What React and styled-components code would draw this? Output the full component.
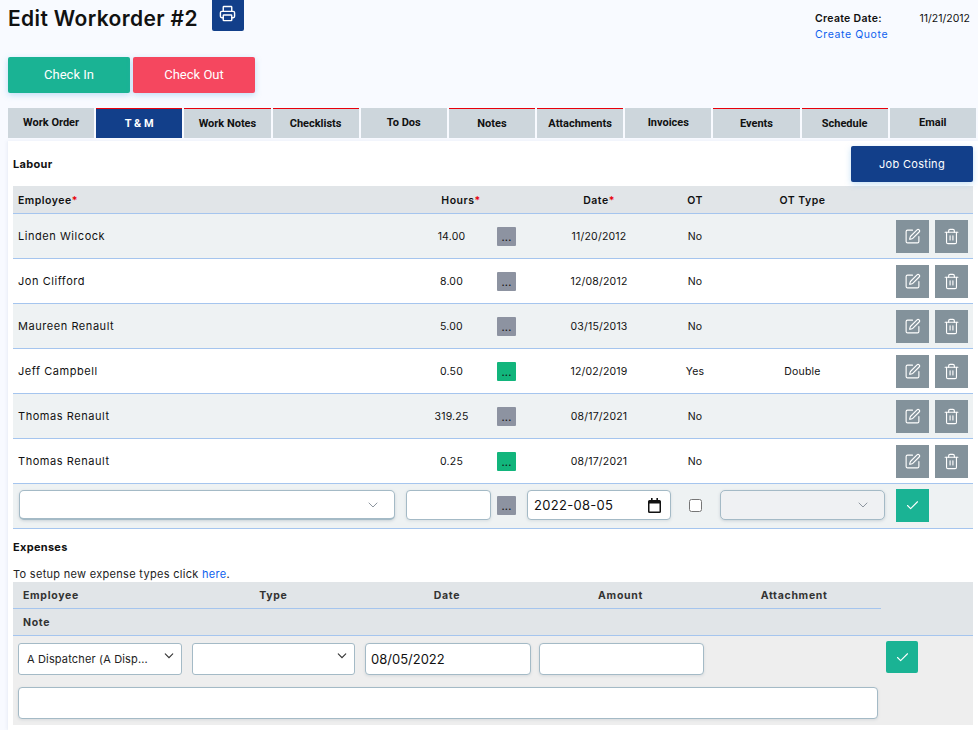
import React from 'react'
import styled, { createGlobalStyle } from 'styled-components'
import { Printer, SquarePen, Trash2, Check, ChevronDown } from 'lucide-react'

const GlobalStyle = createGlobalStyle`
  html, body {
    margin: 0;
    padding: 0;
    background: #f8faff;
    font-family: Inter, "Liberation Sans", sans-serif;
    color: #111;
  }
  * { box-sizing: border-box; }
`

const chevron = encodeURIComponent(
  `<svg xmlns="http://www.w3.org/2000/svg" width="10" height="10" viewBox="0 0 24 24" fill="none" stroke="#333" stroke-width="2.6" stroke-linecap="round"><path d="m3 7 9 9 9-9"/></svg>`
)

const Page = styled.div`
  width: 978px;
  height: 730px;
  overflow: hidden;
  padding-left: 8px;
`

const Header = styled.header`
  display: flex;
  justify-content: space-between;
  height: 57px;
`

const TitleRow = styled.div`
  display: flex;
  align-items: flex-start;
  gap: 14px;
`

const Title = styled.h1`
  margin: 6px 0 0;
  font-size: 21px;
  line-height: 25px;
  font-weight: 600;
  letter-spacing: 0.36px;
  color: #111;
`

const PrintButton = styled.button`
  width: 32px;
  height: 31px;
  border: 0;
  border-radius: 0 0 2px 2px;
  background: #123f8a;
  color: #fff;
  display: flex;
  align-items: center;
  justify-content: center;
  padding: 0 0 4px;
`

const Meta = styled.div`
  width: 155px;
  margin-right: 8px;
  padding-top: 11px;
  font-size: 10.5px;
  line-height: 16px;
  letter-spacing: 0.6px;
`

const MetaRow = styled.div`
  display: flex;
  justify-content: space-between;
  font-weight: 600;
  letter-spacing: 0.3px;

  span:last-child {
    font-weight: 400;
    letter-spacing: 0;
  }
`

const BlueLink = styled.a`
  color: #0d5fee;
  text-decoration: none;
`

const ActionRow = styled.div`
  display: flex;
  gap: 3px;
  height: 51px;
`

const ActionButton = styled.button`
  width: 122px;
  height: 36px;
  border: 0;
  border-radius: 2px;
  background: ${props => props.$bg};
  color: #fff;
  font-family: Roboto, sans-serif;
  font-size: 13px;
  padding: 0 0 2px;
  box-shadow: 0 2px 6px rgba(90, 170, 230, 0.35);
`

const Tabs = styled.nav`
  display: grid;
  grid-template-columns: repeat(11, 86.18px);
  gap: 2px;
  height: 33px;
`

const Tab = styled.div`
  height: 30px;
  display: flex;
  align-items: center;
  justify-content: center;
  background: ${props => (props.$active ? '#123f8a' : '#cdd6dc')};
  color: ${props => (props.$active ? '#fff' : '#111')};
  border-top: ${props => (props.$flagged ? '1.5px solid #e8000b' : '0')};
  padding-bottom: ${props => (props.$flagged ? '0' : '2px')};
  font-family: Roboto, sans-serif;
  font-size: 11px;
  font-weight: 700;
`

const Card = styled.main`
  background: #fff;
  padding: 5px 5px 0;
  height: 589px;
  box-shadow: -1px 0 3px rgba(120, 140, 170, 0.12);
`

const LabourHead = styled.div`
  display: flex;
  justify-content: space-between;
  align-items: center;
  height: 36px;
  margin-bottom: 4px;
`

const Heading = styled.h2`
  margin: 0;
  font-size: 11px;
  line-height: 13px;
  font-weight: 700;
  letter-spacing: 0.3px;
  color: #111;
`

const CostingButton = styled.button`
  width: 122px;
  height: 36px;
  border: 0;
  border-radius: 2px;
  background: #123f8a;
  color: #fff;
  font-family: inherit;
  font-size: 11px;
  letter-spacing: 0.3px;
  box-shadow: 0 2px 6px rgba(90, 170, 230, 0.35);
`

const LabourGrid = `
  display: grid;
  grid-template-columns: 393px 85px 31px 154px 38px 177px 82px;
  align-items: center;
  border-bottom: 1px solid #a5c5ee;
`

const LabourHeadRow = styled.div`
  ${LabourGrid}
  height: 28px;
  padding-top: 2px;
  background: #e1e5e8;
  font-size: 10.5px;
  font-weight: 600;
  letter-spacing: 0.5px;
`

const LabourRow = styled.div`
  ${LabourGrid}
  height: 45px;
  background: ${props => (props.$shade ? '#eef2f3' : '#fff')};
  font-size: 10.5px;
  font-weight: 400;
  letter-spacing: 0.2px;
`

const FormRow = styled(LabourRow)`
  background: #eef2f3;
  padding-bottom: 2px;
`

const Cell = styled.div`
  text-align: ${props => props.$align || 'center'};
  padding-left: ${props => props.$pad || 0}px;
  white-space: nowrap;
  display: ${props => (props.$flex ? 'flex' : 'block')};
  gap: 6px;
`

const NameCell = styled(Cell)`
  font-size: 11px;
  letter-spacing: 0.55px;
`

const Required = styled.span`
  color: #e8000b;
`

const DotsButton = styled.div`
  width: 19px;
  height: 19px;
  margin-left: 6px;
  border-radius: 1px;
  background: ${props => (props.$on ? '#12b57c' : '#8d93a1')};
  color: #111;
  font-size: 11px;
  line-height: 20px;
  text-align: center;
`

const IconButton = styled.div`
  width: 33px;
  height: 33px;
  background: ${props => (props.$ok ? '#1ab394' : '#83929b')};
  color: #fff;
  display: flex;
  align-items: center;
  justify-content: center;
  border-radius: ${props => props.$radius || 0}px;
`

const FakeSelect = styled.div`
  height: 30px;
  margin-left: ${props => props.$left || 0}px;
  width: ${props => props.$width}px;
  display: flex;
  align-items: center;
  justify-content: flex-end;
  padding-right: 13px;
  background: ${props => props.$bg || '#fff'};
  border: 1px solid #a4bac6;
  border-bottom-width: ${props => (props.$heavy ? '2px' : '1px')};
  border-radius: 5px;
  color: #8d96a0;
  box-shadow: 0 1px 3px rgba(90, 110, 130, 0.25);
`

const TextInput = styled.input`
  display: block;
  width: ${props => props.$width}px;
  height: ${props => props.$height || 30}px;
  padding: 0 5px;
  background: #fff;
  border: 1px solid #a4bac6;
  border-radius: 4px;
  font-family: inherit;
  font-size: 13px;
  color: #111;
  outline: none;
  box-shadow: 0 1px 3px rgba(90, 110, 130, 0.15);
`

const AmountInput = styled(TextInput)`
  margin-left: -2px;
`

const DateField = styled.div`
  width: 144px;
  height: 30px;
  margin-left: 5px;
  padding: 0 9px 0 6px;
  display: flex;
  align-items: center;
  justify-content: space-between;
  background: #fff;
  border: 1px solid #a4bac6;
  border-radius: 4px;
  box-shadow: 0 1px 3px rgba(90, 110, 130, 0.15);
`

const DateValue = styled.input`
  width: 100px;
  padding: 0;
  border: 0;
  outline: none;
  background: transparent;
  font-family: inherit;
  font-size: 13px;
  letter-spacing: 0.3px;
  color: #111;
`

const CheckBox = styled.input`
  width: 13px;
  height: 13px;
  margin: 0;
  vertical-align: middle;
`

const Expenses = styled.section`
  padding-top: 12px;
`

const Hint = styled.p`
  margin: 0;
  padding-top: 13px;
  height: 28px;
  font-size: 11px;
  line-height: 14px;
  letter-spacing: 0.3px;
  color: #222;
`

const ExpenseHeader = styled.div`
  background: #e1e5e8;
  border-bottom: 1px solid #a5c5ee;
  height: 54px;
`

const ExpenseLabels = styled.div`
  display: grid;
  grid-template-columns: repeat(5, 173.6px);
  width: 868px;
  height: 27px;
  align-items: center;
  border-bottom: 1px solid #a5c5ee;
  font-size: 10.5px;
  font-weight: 700;
  letter-spacing: 0.7px;
  color: #333;
`

const NoteLabel = styled.div`
  height: 26px;
  padding-left: 10px;
  line-height: 28px;
  font-size: 10.5px;
  font-weight: 700;
  letter-spacing: 0.7px;
  color: #333;
`

const ExpenseBody = styled.div`
  position: relative;
  height: 89px;
  background: #eee;
  padding: 7px 0 0 5px;
`

const ExpenseFields = styled.div`
  display: flex;
  gap: 10px;
  height: 44px;
`

const NativeSelect = styled.select`
  appearance: none;
  width: ${props => props.$width}px;
  height: 32px;
  padding: 0 20px 0 8px;
  background: #fff url("data:image/svg+xml,${chevron}") no-repeat right 7px top 7px;
  border: 1px solid #a4bac6;
  border-radius: 3px;
  font-family: inherit;
  font-size: 11px;
  letter-spacing: 0.15px;
  color: #222;
`

const FloatingOk = styled(IconButton)`
  position: absolute;
  left: 873px;
  top: 5px;
  width: 32px;
  height: 32px;
`

const CalendarIcon = () => (
  <svg width="13" height="15" viewBox="0 0 13 15" aria-hidden="true">
    <path d="M3 0h1.6v2h3.8V0H10v2h1.5A1.5 1.5 0 0 1 13 3.5v10a1.5 1.5 0 0 1-1.5 1.5h-10A1.5 1.5 0 0 1 0 13.500v-10A1.500 1.500 0 0 1 1.500 2H3z M1.500 5.500v8h10v-8z" fill="#111" fillRule="evenodd" />
  </svg>
)

const rows = [
  { name: 'Linden Wilcock', hours: '14.00', date: '11/20/2012', ot: 'No', type: '' },
  { name: 'Jon Clifford', hours: '8.00', date: '12/08/2012', ot: 'No', type: '' },
  { name: 'Maureen Renault', hours: '5.00', date: '03/15/2013', ot: 'No', type: '' },
  { name: 'Jeff Campbell', hours: '0.50', date: '12/02/2019', ot: 'Yes', type: 'Double', on: true },
  { name: 'Thomas Renault', hours: '319.25', date: '08/17/2021', ot: 'No', type: '' },
  { name: 'Thomas Renault', hours: '0.25', date: '08/17/2021', ot: 'No', type: '', on: true },
]

const tabs = [
  { label: 'Work Order' },
  { label: 'T & M', flagged: true, active: true },
  { label: 'Work Notes', flagged: true },
  { label: 'Checklists', flagged: true },
  { label: 'To Dos' },
  { label: 'Notes', flagged: true },
  { label: 'Attachments', flagged: true },
  { label: 'Invoices' },
  { label: 'Events', flagged: true },
  { label: 'Schedule', flagged: true },
  { label: 'Email' },
]

const App = () => {
  return (
    <Page>
      <GlobalStyle />
      <Header>
        <TitleRow>
          <Title>Edit Workorder #2</Title>
          <PrintButton aria-label="Print">
            <Printer size={17} strokeWidth={2} />
          </PrintButton>
        </TitleRow>
        <Meta>
          <MetaRow>
            <span>Create Date:</span>
            <span>11/21/2012</span>
          </MetaRow>
          <BlueLink href="#">Create Quote</BlueLink>
        </Meta>
      </Header>

      <ActionRow>
        <ActionButton $bg="#1ab394">Check In</ActionButton>
        <ActionButton $bg="#f5475f">Check Out</ActionButton>
      </ActionRow>

      <Tabs>
        {tabs.map(t => (
          <Tab key={t.label} $active={t.active} $flagged={t.flagged}>
            {t.label}
          </Tab>
        ))}
      </Tabs>

      <Card>
        <LabourHead>
          <Heading>Labour</Heading>
          <CostingButton>Job Costing</CostingButton>
        </LabourHead>

        <LabourHeadRow>
          <Cell $align="left" $pad={5}>
            Employee<Required>*</Required>
          </Cell>
          <Cell $pad={25}>
            Hours<Required>*</Required>
          </Cell>
          <Cell />
          <Cell>
            Date<Required>*</Required>
          </Cell>
          <Cell>OT</Cell>
          <Cell>OT Type</Cell>
          <Cell />
        </LabourHeadRow>

        {rows.map((r, i) => (
          <LabourRow key={i} $shade={i % 2 === 0}>
            <NameCell $align="left" $pad={5}>
              {r.name}
            </NameCell>
            <Cell $pad={6}>{r.hours}</Cell>
            <DotsButton $on={r.on}>...</DotsButton>
            <Cell>{r.date}</Cell>
            <Cell>{r.ot}</Cell>
            <Cell>{r.type}</Cell>
            <Cell $flex $pad={5}>
              <IconButton>
                <SquarePen size={17} strokeWidth={1.6} />
              </IconButton>
              <IconButton>
                <Trash2 size={17} strokeWidth={1.6} />
              </IconButton>
            </Cell>
          </LabourRow>
        ))}

        <FormRow>
          <FakeSelect $left={6} $width={376} $heavy>
            <ChevronDown size={16} strokeWidth={1.5} />
          </FakeSelect>
          <TextInput $width={85} />
          <DotsButton>...</DotsButton>
          <DateField>
            <DateValue defaultValue="2022-08-05" />
            <CalendarIcon />
          </DateField>
          <Cell>
            <CheckBox type="checkbox" />
          </Cell>
          <FakeSelect $left={6} $width={165} $bg="#eff1f3">
            <ChevronDown size={16} strokeWidth={1.5} />
          </FakeSelect>
          <Cell $flex $pad={5}>
            <IconButton $ok>
              <Check size={15} strokeWidth={1.7} />
            </IconButton>
          </Cell>
        </FormRow>

        <Expenses>
          <Heading>Expenses</Heading>
          <Hint>
            To setup new expense types click <BlueLink href="#">here</BlueLink>.
          </Hint>
          <ExpenseHeader>
            <ExpenseLabels>
              <Cell $align="left" $pad={10}>
                Employee
              </Cell>
              <Cell>Type</Cell>
              <Cell>Date</Cell>
              <Cell>Amount</Cell>
              <Cell>Attachment</Cell>
            </ExpenseLabels>
            <NoteLabel>Note</NoteLabel>
          </ExpenseHeader>
          <ExpenseBody>
            <ExpenseFields>
              <NativeSelect $width={164}>
                <option>A Dispatcher (A Disp...</option>
              </NativeSelect>
              <NativeSelect $width={163}>
                <option />
              </NativeSelect>
              <TextInput $width={166} $height={32} defaultValue="08/05/2022" />
              <AmountInput $width={165} $height={32} />
            </ExpenseFields>
            <TextInput $width={860} $height={32} />
            <FloatingOk $ok $radius={2}>
              <Check size={15} strokeWidth={1.7} />
            </FloatingOk>
          </ExpenseBody>
        </Expenses>
      </Card>
    </Page>
  )
}

export default App
